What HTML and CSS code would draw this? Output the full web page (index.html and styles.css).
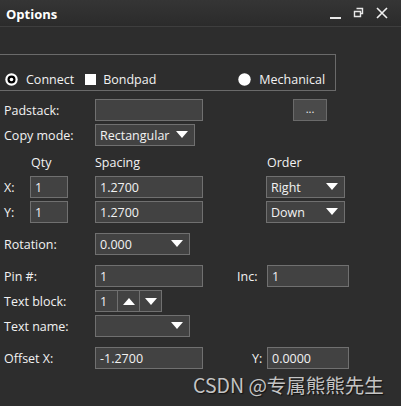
FILE: index.html
```html
<!DOCTYPE html>
<html>
<head>
<meta charset="utf-8">
<link rel="stylesheet" href="styles.css">
</head>
<body>
<div class="win">
  <div class="titlebar">
    <span class="title">Options</span>
    <div class="tb-icons">
      <svg class="ic" width="14" height="14" viewBox="0 0 14 14"><rect x="1" y="11" width="11" height="2" fill="#e8e8e8"/></svg>
      <svg class="ic" width="14" height="14" viewBox="0 0 14 14"><path d="M4.5 2.5h6v5h-2M2.5 5.5h6v5h-6z" fill="none" stroke="#e8e8e8" stroke-width="1.4"/></svg>
      <svg class="ic" width="14" height="14" viewBox="0 0 14 14"><path d="M2 2L12 12M12 2L2 12" stroke="#f0f0f0" stroke-width="1.6"/></svg>
    </div>
  </div>
  <div class="content">
    <div class="group">
      <div class="opt opt-connect">
        <svg width="13" height="13" viewBox="0 0 13 13"><circle cx="6.5" cy="6.5" r="6.2" fill="#fff"/><circle cx="6.5" cy="6.5" r="4" fill="#000"/><circle cx="6.5" cy="6.5" r="1.8" fill="#fff"/></svg>
        <span>Connect</span>
      </div>
      <div class="opt opt-bond">
        <span class="sq"></span>
        <span>Bondpad</span>
      </div>
      <div class="opt opt-mech">
        <svg width="13" height="13" viewBox="0 0 13 13"><circle cx="6.5" cy="6.5" r="6.2" fill="#fff"/></svg>
        <span>Mechanical</span>
      </div>
    </div>

    <div class="row r-padstack">
      <span class="lbl">Padstack:</span>
      <div class="field w108"></div>
      <div class="btn">...</div>
    </div>
    <div class="row r-tight">
      <span class="lbl">Copy mode:</span>
      <div class="field drop w100">Rectangular<i class="tri"></i></div>
    </div>

    <div class="row r-head">
      <span class="h-qty">Qty</span>
      <span class="h-sp">Spacing</span>
      <span class="h-ord">Order</span>
    </div>
    <div class="row r-xy">
      <span class="axis">X:</span>
      <div class="field w38">1</div>
      <div class="field w108 sp">1.2700</div>
      <div class="field drop w79 ord">Right<i class="tri"></i></div>
    </div>
    <div class="row r-tight">
      <span class="axis">Y:</span>
      <div class="field w38">1</div>
      <div class="field w108 sp">1.2700</div>
      <div class="field drop w79 ord">Down<i class="tri"></i></div>
    </div>

    <div class="row r-gap">
      <span class="lbl">Rotation:</span>
      <div class="field drop w95">0.000<i class="tri"></i></div>
    </div>
    <div class="row r-gap">
      <span class="lbl">Pin #:</span>
      <div class="field w108">1</div>
      <span class="lbl2 inc">Inc:</span>
      <div class="field w82">1</div>
    </div>
    <div class="row r-tight">
      <span class="lbl">Text block:</span>
      <div class="spin">
        <div class="spin-val">1</div>
        <div class="spin-btn"><i class="tri up"></i></div>
        <div class="spin-btn"><i class="tri"></i></div>
      </div>
    </div>
    <div class="row r-tight">
      <span class="lbl">Text name:</span>
      <div class="field drop w95"><i class="tri"></i></div>
    </div>
    <div class="row r-gap">
      <span class="lbl">Offset X:</span>
      <div class="field w108">-1.2700</div>
      <span class="lbl2 yl">Y:</span>
      <div class="field w82">0.0000</div>
    </div>
  </div>
  <div class="watermark">CSDN @专属熊熊先生</div>
</div>
</body>
</html>
```
FILE: styles.css
```css
html, body {
  margin: 0;
  padding: 0;
  background: #2d2d2d;
}
body {
  width: 401px;
  height: 406px;
  overflow: hidden;
  font-family: "Open Sans", "Liberation Sans", sans-serif;
  font-size: 12.5px;
  color: #f2f2f2;
}
.win {
  position: relative;
  width: 401px;
  height: 406px;
  background: #2d2d2d;
}
.titlebar {
  height: 26px;
  border-bottom: 1px solid #3e3e3e;
  background: linear-gradient(#353535, #2b2b2b);
  display: flex;
  align-items: center;
  justify-content: space-between;
  padding: 0 12px 0 6px;
}
.title {
  font-weight: bold;
  font-size: 13px;
  color: #fff;
  margin-top: 1px;
}
.tb-icons {
  display: flex;
  gap: 9px;
  align-items: center;
}
.ic { display: block; }
.content {
  padding-top: 27px;
}
.group {
  margin-left: -10px;
  width: 344px;
  height: 35px;
  border: 1px solid #6a6a6a;
  display: flex;
  align-items: flex-end;
  box-sizing: content-box;
}
.opt {
  display: flex;
  align-items: center;
  height: 18px;
  margin-bottom: 2px;
}
.opt svg { display: block; }
.opt span { margin-left: 8px; }
.opt-connect { margin-left: 14px; }
.opt-bond { margin-left: 11px; }
.opt-mech { margin-left: 82px; }
.sq {
  display: inline-block;
  width: 11px;
  height: 11px;
  background: #fff;
  margin-left: 0 !important;
}
.opt-bond .sq + span { margin-left: 7px; }
.row {
  display: flex;
  align-items: center;
  height: 22px;
  padding-left: 4px;
}
.r-padstack { margin-top: 8px; }
.r-tight { margin-top: 3px; }
.r-gap { margin-top: 10px; }
.r-head { margin-top: 6px; height: 21px; }
.r-xy { margin-top: 3px; }
.lbl { width: 91px; flex: none; white-space: nowrap; }
.axis { width: 26px; flex: none; }
.h-qty { margin-left: 27px; width: 64px; }
.h-sp { width: 172px; }
.field {
  box-sizing: border-box;
  height: 22px;
  border: 1px solid #707070;
  background: #424242;
  padding: 0 4px;
  display: flex;
  align-items: center;
  position: relative;
  flex: none;
}
.w108 { width: 108px; }
.w100 { width: 100px; }
.w95 { width: 95px; }
.w38 { width: 38px; }
.w79 { width: 79px; }
.w82 { width: 82px; }
.sp { margin-left: 27px; }
.ord { margin-left: 63px; }
.btn {
  margin-left: 90px;
  box-sizing: border-box;
  width: 34px;
  height: 22px;
  border: 1px solid #6a6a6a;
  background: #4a4a4a;
  display: flex;
  align-items: center;
  justify-content: center;
  font-size: 11px;
  padding-bottom: 3px;
}
.tri {
  width: 0;
  height: 0;
  border-left: 6px solid transparent;
  border-right: 6px solid transparent;
  border-top: 7px solid #fff;
  display: block;
}
.drop .tri {
  position: absolute;
  right: 6px;
  top: 6px;
}
.tri.up {
  border-top: none;
  border-bottom: 7px solid #fff;
}
.lbl2 { flex: none; }
.inc { margin-left: 34px; width: 30px; }
.yl { margin-left: 49px; width: 15px; }
.spin {
  display: flex;
  height: 22px;
  box-sizing: border-box;
  border: 1px solid #707070;
  background: #424242;
}
.spin-val {
  width: 22px;
  padding-left: 4px;
  box-sizing: border-box;
  display: flex;
  align-items: center;
  border-right: 1px solid #707070;
}
.spin-btn {
  width: 21px;
  display: flex;
  align-items: center;
  justify-content: center;
  border-right: 1px solid #707070;
}
.spin-btn:last-child { border-right: none; }
.watermark {
  position: absolute;
  left: 193px;
  top: 370px;
  font-family: "Noto Sans CJK SC", "Liberation Sans", sans-serif;
  font-size: 19.5px;
  color: #c4c4c4;
  text-shadow: 1px 1px 1px #111;
}
```
